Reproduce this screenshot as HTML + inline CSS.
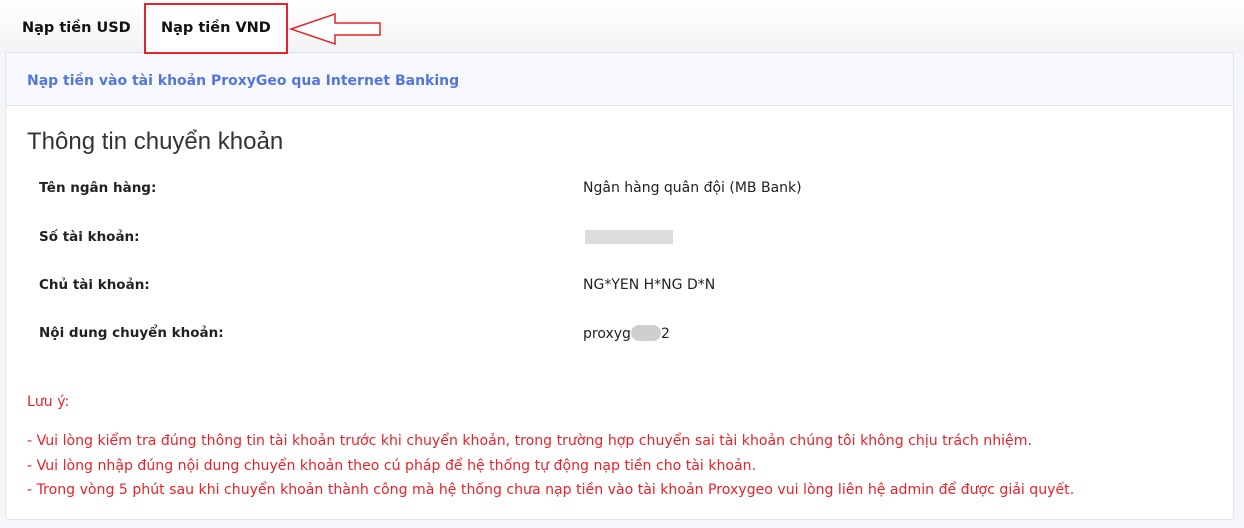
<!DOCTYPE html>
<html><head><meta charset="utf-8"><style>
body{margin:0;width:1244px;height:528px;background:#f5f6fa;font-family:"DejaVu Sans","Liberation Sans",sans-serif;position:relative;overflow:hidden}
.top{position:absolute;left:0;top:0;width:1244px;height:53px;background:linear-gradient(#fff,#f3f3f5)}
.tab{position:absolute;font-weight:bold;font-size:14.5px;color:#111}
.card{position:absolute;left:5px;top:52px;width:1227px;height:466px;background:#fff;border:1px solid #e3e5ee;border-radius:0 0 4px 4px}
.hd{height:52px;background:#f7f8fc;border-bottom:1px solid #e3e5ee;color:#5376de;font-weight:bold;font-size:14px;line-height:56px;padding-left:21px}
.t{position:absolute;font-size:14px;color:#222}
.b{font-weight:bold;font-size:13.5px}
.r{position:absolute;left:21px;font-size:14.1px;color:#e8222a}
</style></head><body>
<div class="top"></div>
<div class="tab" style="left:22px;top:20px">Nạp tiền USD</div>
<div style="position:absolute;left:144px;top:3px;width:140px;height:47px;border:2px solid #e3242b;background:#fff;z-index:2"></div>
<div class="tab" style="left:161px;top:20px;z-index:3">Nạp tiền VND</div>
<svg style="position:absolute;left:288px;top:12px" width="96" height="34"><polygon points="3,17 47,2 47,11 92,11 92,23 47,23 47,32" fill="#fff" stroke="#e3242b" stroke-width="1.5"/></svg>
<div class="card">
<div class="hd">Nạp tiền vào tài khoản ProxyGeo qua Internet Banking</div>
<div class="t" style="left:21px;top:75px;font-size:24px;color:#333;font-family:'Liberation Sans',sans-serif">Thông tin chuyển khoản</div>
<div class="t b" style="left:33px;top:127px">Tên ngân hàng:</div>
<div class="t" style="left:577px;top:127px">Ngân hàng quân đội (MB Bank)</div>
<div class="t b" style="left:33px;top:176px">Số tài khoản:</div>
<div style="position:absolute;left:579px;top:177px;width:88px;height:14px;background:#dcdcdc"></div>
<div class="t b" style="left:33px;top:224px">Chủ tài khoản:</div>
<div class="t" style="left:577px;top:224px">NG*YEN H*NG D*N</div>
<div class="t b" style="left:33px;top:272px">Nội dung chuyển khoản:</div>
<div class="t" style="left:577px;top:272px">proxyg<span style="display:inline-block;width:30px;height:16px;background:#cfcfcf;border-radius:8px;vertical-align:-3px"></span>2</div>
<div class="r" style="top:341px">Lưu ý:</div>
<div class="r" style="top:380px">- Vui lòng kiểm tra đúng thông tin tài khoản trước khi chuyển khoản, trong trường hợp chuyển sai tài khoản chúng tôi không chịu trách nhiệm.</div>
<div class="r" style="top:405px">- Vui lòng nhập đúng nội dung chuyển khoản theo cú pháp để hệ thống tự động nạp tiền cho tài khoản.</div>
<div class="r" style="top:429px">- Trong vòng 5 phút sau khi chuyển khoản thành công mà hệ thống chưa nạp tiền vào tài khoản Proxygeo vui lòng liên hệ admin để được giải quyết.</div>
</div>
</body></html>
